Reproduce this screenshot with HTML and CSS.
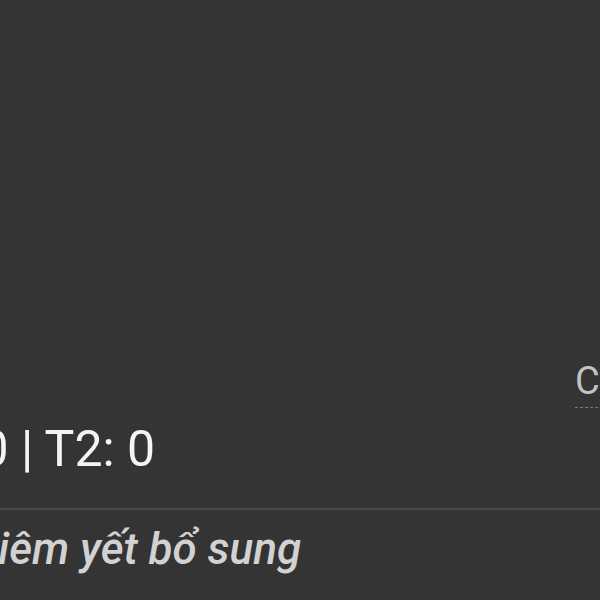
FILE: index.html
```html
<!DOCTYPE html>
<html lang="vi">
<head>
<meta charset="utf-8">
<link rel="stylesheet" href="styles.css">
</head>
<body>
<div class="screen">
  <div class="card">
    <div class="link-row"><span class="link">Chi tiết</span></div>
    <div class="stats">T1: 0 | T2: 0</div>
  </div>
  <div class="divider"></div>
  <div class="section-title">Niêm yết bổ sung</div>
</div>
</body>
</html>
```
FILE: styles.css
```css
html, body {
  margin: 0;
  padding: 0;
  background: #343434;
}
.screen {
  width: 600px;
  height: 600px;
  overflow: hidden;
  background: #343434;
  font-family: Roboto, "Noto Sans", sans-serif;
  display: flex;
  flex-direction: column;
}
.card {
  padding-top: 358px;
  display: flex;
  flex-direction: column;
}
.link-row {
  display: flex;
  justify-content: flex-start;
  padding-left: 575px;
  white-space: nowrap;
}
.link {
  color: #c2c2c2;
  font-size: 38px;
  line-height: 46px;
  padding-bottom: 3px;
  border-bottom: 1px dashed #7a7a7a;
}
.stats {
  margin-left: -102px;
  margin-top: 13px;
  color: #f4f4f4;
  font-size: 50px;
  line-height: 56px;
  white-space: nowrap;
}
.divider {
  margin-top: 31px;
  height: 2px;
  background: #4a4a4a;
}
.section-title {
  margin-left: -32px;
  margin-top: 14px;
  color: #d2d2d2;
  font-size: 44px;
  font-style: italic;
  font-weight: 500;
  line-height: 50px;
  white-space: nowrap;
}
```
